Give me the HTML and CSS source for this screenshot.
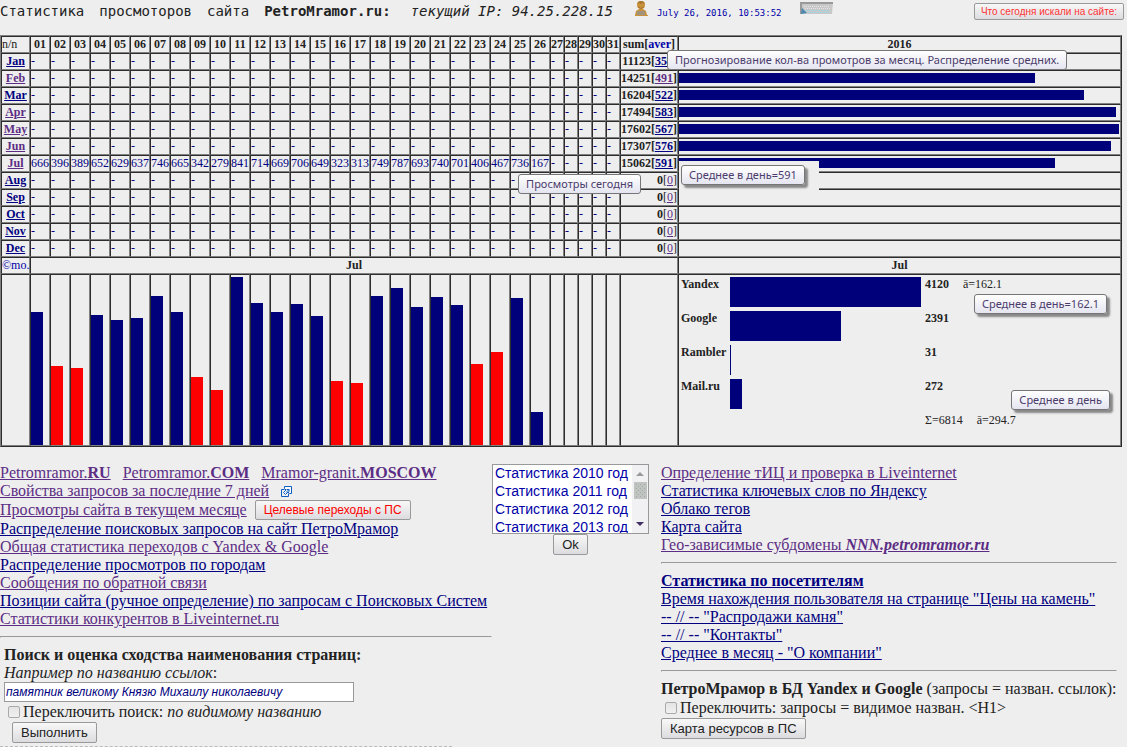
FILE: index.html
```html
<!DOCTYPE html>
<html lang="ru">
<head>
    <meta charset="UTF-8">
    <meta name="viewport" content="width=device-width, initial-scale=1.0">
    <title>Статистика просмоторов сайта PetroMramor.ru</title>
    <link rel="stylesheet" href="styles.css">
</head>
<body>

    <header class="top">
        <h1 class="title"><span>Статистика</span><span>просмоторов</span><span>сайта</span><b>PetroMramor.ru:</b></h1>
        <i class="ip">текущий IP: 94.25.228.15</i>
        <svg class="user-icon" width="16" height="18" viewBox="0 0 16 18">
            <path d="M2 15 L3 11 L6 9 H10 L13 11 L14 15 Z" fill="#c8923c"/>
            <circle cx="8" cy="5" r="4" fill="#c8923c"/>
            <path d="M4 4 Q5 1 8 1 Q11 1 12 4 L10 3 L8 4 L6 3 Z" fill="#a8762c"/>
            <path d="M5 7 Q8 10 11 7" fill="none" stroke="#a8762c"/>
            <path d="M4 11 H12 V15 H4 Z" fill="#a0927c"/>
            <path d="M2 15.5 H15" stroke="#c8923c"/>
        </svg>
        <span class="date">July 26, 2016, 10:53:52</span>
        <svg class="counter" width="33" height="13" viewBox="0 0 33 13">
            <path d="M0 0 H33 L32 12 H0 Z" fill="#c8c8c8"/>
            <path d="M0 1 H33 M1 0 V12" stroke="#999" stroke-width="2"/>
            <path d="M4 4.5 H30 M5 6.5 H30" stroke="#e4e4e4" stroke-dasharray="1 1"/>
            <path d="M6 8.5 H30 M8 10.5 H30" stroke="#9fd4e4" stroke-dasharray="2 1"/>
            <path d="M2 6 L7 11 L1 12 Z" fill="#4a88b0"/>
        </svg>
        <button class="btn btn-search">Что сегодня искали на сайте:</button>
    </header>

    <table class="stat">
        <colgroup id="cols"></colgroup>
        <tbody id="stat"></tbody>
    </table>

    <main class="bottom">
        <section class="left">
            <div class="line sites">
                <a href="#" class="v">Petromramor.<b>RU</b></a>
                <a href="#" class="v">Petromramor.<b>COM</b></a>
                <a href="#" class="v">Mramor-granit.<b>MOSCOW</b></a>
            </div>
            <div class="line with-icon">
                <a href="#" class="v">Свойства запросов за последние 7 дней</a>
                <svg width="11" height="11" viewBox="0 0 11 11" fill="none" stroke="#0b5cc4">
                    <path d="M3.5 3.5 H0.5 V10.5 H7.5 V7.5"/>
                    <path d="M3.5 0.5 H10.5 V7.5 H8.5 L7 6 L4.5 8.5 L2.5 6.5 L5 4 L3.5 2.5 Z" fill="#fff"/>
                    <path d="M5.5 3.5 H8 V6 M8 3.5 L5 6.5"/>
                </svg>
            </div>
            <div class="line with-btn">
                <a href="#" class="v">Просмотры сайта в текущем месяце</a>
                <button class="btn btn-target">Целевые переходы с ПС</button>
            </div>
            <div class="line"><a href="#">Распределение поисковых запросов на сайт ПетроМрамор</a></div>
            <div class="line"><a href="#" class="v">Общая статистика переходов с Yandex &amp; Google</a></div>
            <div class="line"><a href="#">Распределение просмотров по городам</a></div>
            <div class="line"><a href="#" class="v">Сообщения по обратной связи</a></div>
            <div class="line"><a href="#">Позиции сайта (ручное определение) по запросам с Поисковых Систем</a></div>
            <div class="line"><a href="#" class="v">Статистики конкурентов в Liveinternet.ru</a></div>
            <hr>
            <form class="search">
                <div class="line"><b>Поиск и оценка сходства наименования страниц:</b></div>
                <label class="line" for="q"><i>Например по названию ссылок</i>:</label>
                <input type="text" id="q" class="query" value="памятник великому Князю Михаилу николаевичу">
                <div class="check">
                    <input type="checkbox" id="visible">
                    <label for="visible">Переключить поиск: <i>по видимому названию</i></label>
                </div>
                <button type="button" class="btn btn-run">Выполнить</button>
            </form>
            <div class="dash-line"></div>
        </section>

        <form class="years">
            <div class="year-box">
                <select size="4" class="year-list" aria-label="Статистика по годам">
                    <option>Статистика 2010 год</option>
                    <option>Статистика 2011 год</option>
                    <option>Статистика 2012 год</option>
                    <option>Статистика 2013 год</option>
                    <option>Статистика 2014 год</option>
                    <option>Статистика 2015 год</option>
                    <option>Статистика 2016 год</option>
                </select>
                <svg class="scroll" width="16" height="68" viewBox="0 0 16 68" aria-hidden="true">
                    <rect width="16" height="68" fill="#f1f1f4"/>
                    <path d="M4 11 L8 7 L12 11 Z" fill="#999"/>
                    <rect x="2" y="17" width="13" height="17" fill="#c0c4c0"/>
                    <path d="M4 19.5 H14 M4 23.5 H14 M4 27.5 H14 M4 31.5 H14" stroke="#a4a8a4" stroke-dasharray="1 3"/>
                    <path d="M6 21.5 H14 M6 25.5 H14 M6 29.5 H14" stroke="#a4a8a4" stroke-dasharray="1 3"/>
                    <path d="M4 57 L12 57 L8 61 Z" fill="#403060"/>
                </svg>
            </div>
            <button type="button" class="btn">Ok</button>
        </form>

        <section class="right">
            <div class="line"><a href="#" class="v">Определение тИЦ и проверка в Liveinternet</a></div>
            <div class="line"><a href="#">Статистика ключевых слов по Яндексу</a></div>
            <div class="line"><a href="#">Облако тегов</a></div>
            <div class="line"><a href="#">Карта сайта</a></div>
            <div class="line"><a href="#" class="v">Гео-зависимые субдомены <b><i>NNN.petromramor.ru</i></b></a></div>
            <hr>
            <div class="line"><a href="#"><b>Статистика по посетителям</b></a></div>
            <div class="line"><a href="#">Время нахождения пользователя на странице "Цены на камень"</a></div>
            <div class="line"><a href="#">-- // -- "Распродажи камня"</a></div>
            <div class="line"><a href="#">-- // -- "Контакты"</a></div>
            <div class="line"><a href="#">Среднее в месяц - "О компании"</a></div>
            <hr>
            <form>
                <div class="line"><b>ПетроМрамор в БД Yandex и Google</b> (запросы = назван. ссылок):</div>
                <div class="check">
                    <input type="checkbox" id="h1">
                    <label for="h1">Переключить: запросы = видимое назван. &lt;H1&gt;</label>
                </div>
                <button type="button" class="btn">Карта ресурсов в ПС</button>
            </form>
        </section>
    </main>

    <script>
        // name, sum, average, visited month link, visited average link
        const months = [
            ["Jan", 11123, 358, 0, 0], ["Feb", 14251, 491, 1, 1], ["Mar", 16204, 522, 0, 0],
            ["Apr", 17494, 583, 1, 0], ["May", 17602, 567, 1, 0], ["Jun", 17307, 576, 1, 0],
            ["Jul", 15062, 591, 1, 0], ["Aug", 0, 0, 0, 1], ["Sep", 0, 0, 0, 1],
            ["Oct", 0, 0, 0, 1], ["Nov", 0, 0, 0, 1], ["Dec", 0, 0, 0, 1]
        ];
        const days = [666, 396, 389, 652, 629, 637, 746, 665, 342, 279, 841, 714, 669,
            706, 649, 323, 313, 749, 787, 693, 740, 701, 406, 467, 736, 167];
        const engines = [["Yandex", 4120, 191], ["Google", 2391, 111], ["Rambler", 31, 1], ["Mail.ru", 272, 12]];

        let cols = '<col class="c-month">';
        let html = '<tr><td>n/n</td>';
        for (let d = 1; d <= 31; d++) {
            cols += d <= 26 ? '<col class="c-day">' : '<col class="c-rest">';
            html += '<th>' + String(d).padStart(2, "0") + '</th>';
        }
        document.getElementById("cols").innerHTML = cols + '<col class="c-sum"><col>';
        html += '<th class="over">sum[<span class="aver">aver</span>]' +
            '<div class="tip tip-forecast">Прогнозирование кол-ва промотров за месяц. Распределение средних.</div></th><th>2016</th></tr>';

        for (const [name, sum, aver, v1, v2] of months) {
            html += '<tr><th><a href="#"' + (v1 ? ' class="v"' : '') + '>' + name + '</a></th>';
            for (let d = 0; d < 31; d++) {
                html += '<td class="num">' + (name == "Jul" && d < 26 ? days[d] : "-") + '</td>';
            }
            html += '<td class="sum over"><b>' + sum + '</b><span class="' + (sum ? 'bold' : '') + '">[<a href="#"' +
                (v2 ? ' class="v"' : '') + '>' + aver + '</a>]</span>' +
                (name == "Jul" ? '<div class="tip tip-today">Просмотры сегодня</div>' : '') + '</td>';
            html += '<td class="bar-cell over"><div class="hbar" style="width:' + Math.floor(sum / 40) + 'px"></div>' +
                (name == "Jul" ? '<div class="tip-back"><div class="tip shadow">Среднее в день=591</div></div>' : '') + '</td></tr>';
        }

        html += '<tr><td class="mo">©mo.</td><th colspan="32">Jul</th><th>Jul</th></tr>';

        html += '<tr class="chart"><td></td>';
        for (let d = 0; d < 31; d++) {
            let bar = "";
            if (days[d]) {
                const weekend = [1, 2, 8, 9, 15, 16, 22, 23].includes(d);
                bar = '<div class="vbar' + (weekend ? ' weekend' : '') + '" style="height:' + Math.floor(days[d] / 5) + 'px"></div>';
            }
            html += '<td>' + bar + '</td>';
        }
        html += '<td></td><td class="engines-cell over"><table class="engines">';
        for (const [name, n, w] of engines) {
            html += '<tr><th class="e-name">' + name + '</th><td class="e-bar"><div class="ebar" style="width:' + w + 'px"></div></td>' +
                '<td><b>' + n + '</b>' + (name == "Yandex" ? '<span class="avg">ā=162.1</span>' : '') + '</td></tr>';
        }
        html += '<tr><td></td><td></td><td>Σ=6814<span class="avg">ā=294.7</span></td></tr></table>' +
            '<div class="tip shadow tip-yandex">Среднее в день=162.1</div>' +
            '<div class="tip shadow tip-total">Среднее в день</div></td></tr>';
        document.getElementById("stat").innerHTML = html;
    </script>
</body>
</html>
```
FILE: styles.css
```css
body {
    margin: 0;
    background: #eee;
    color: #222;
    font-family: "Liberation Serif", "Times New Roman", serif;
    font-size: 16px;
    line-height: 18px;
}

a {
    color: #000080;
}

a.v {
    color: #5c2d84;
}

.top {
    display: flex;
    align-items: flex-start;
    height: 35px;
    font-family: "DejaVu Sans Mono", monospace;
    font-size: 14px;
    line-height: 22px;
    white-space: nowrap;
}

.title {
    display: flex;
    gap: 15px;
    margin: 0 20px 0 0;
    font-size: 14px;
    font-weight: normal;
}

.user-icon {
    margin: 0 8px 0 20px;
}

.date {
    margin-right: 18px;
    color: #0000a8;
    font-size: 9px;
    line-height: 26px;
}

.counter {
    margin-top: 2px;
}

.btn {
    height: 21px;
    padding: 0 8px;
    border: 1px solid #999;
    border-radius: 2px;
    background: linear-gradient(#f8f8f8, #dcdce0);
    color: #222;
    font-family: "Liberation Sans", Arial, sans-serif;
    font-size: 13px;
    line-height: 18px;
    white-space: nowrap;
}

.btn-search {
    height: 17px;
    margin: 3px 3px 0 auto;
    padding: 0 6px;
    color: #f33;
    font-size: 10px;
    line-height: 14px;
}

.stat {
    width: calc(100% - 5px);
    table-layout: fixed;
    border: 1px solid;
    border-color: #808080 #2c2c2c #2c2c2c #808080;
    border-spacing: 0;
    font-size: 12px;
    line-height: 15px;
}

.stat th,
.stat td {
    height: 15px;
    padding: 0;
    border: 1px solid;
    border-color: #2c2c2c #808080 #808080 #2c2c2c;
    white-space: nowrap;
}

.c-month { width: 29px; }
.c-day { width: 20px; }
.c-rest { width: 14px; }
.c-sum { width: 58px; }

.aver,
.stat .mo {
    color: #0000a8;
}

.stat .num {
    color: #000080;
}

.sum {
    text-align: right;
}

.bold {
    font-weight: bold;
}

.over {
    position: relative;
}

.stat .bar-cell {
    vertical-align: top;
}

.hbar {
    height: 10px;
    margin-top: 2px;
    background: #00007b;
}

.stat .chart td {
    height: 170px;
    vertical-align: bottom;
}

.vbar {
    width: 12px;
    background: #00007b;
}

.weekend {
    background: #f00;
}

.stat .chart .engines-cell {
    height: 168px;
    padding: 2px 2px 0;
    vertical-align: top;
}

.engines {
    border-spacing: 0;
}

.stat .engines th,
.stat .chart .engines td {
    height: 15px;
    border: 0;
    text-align: left;
    vertical-align: top;
}

.stat .engines .e-name {
    width: 49px;
}

.stat .engines .e-bar {
    width: 195px;
}

.ebar {
    height: 30px;
    margin-bottom: 4px;
    background: #00007b;
}

.avg {
    margin-left: 14px;
}

.tip {
    position: absolute;
    z-index: 2;
    box-sizing: border-box;
    height: 20px;
    padding: 0 7px;
    border: 1px solid #767676;
    border-radius: 3px;
    background: linear-gradient(#fff, #e4e5f0);
    color: #4c3c6c;
    font-family: "Noto Sans", "Open Sans", sans-serif;
    font-size: 11px;
    font-weight: normal;
    line-height: 17px;
    white-space: nowrap;
}

.shadow {
    box-shadow: 3px 3px 2px #888;
}

.tip-forecast {
    top: 13px;
    left: 46px;
}

.tip-today {
    top: 18px;
    right: 36px;
}

.tip-back {
    position: absolute;
    z-index: 1;
    top: 5px;
    left: 0;
    width: 140px;
    height: 30px;
    background: #eee;
}

.tip-back .tip {
    top: 4px;
    left: 2px;
}

.tip-yandex {
    top: 19px;
    right: 13px;
}

.tip-total {
    top: 115px;
    right: 10px;
}

.bottom {
    display: flex;
    align-items: flex-start;
    margin-top: 17px;
}

.left {
    width: 492px;
}

.line {
    display: block;
    min-height: 18px;
    white-space: nowrap;
}

.sites,
.with-icon,
.with-btn {
    display: flex;
    align-items: center;
    gap: 12px;
}

.with-btn {
    gap: 8px;
    height: 20px;
}

.with-btn .btn {
    height: 20px;
}

.btn-target {
    color: #f00;
    font-size: 12px;
}

hr {
    margin: 8px 0;
    border: 1px solid;
    border-color: #999 #eee #eee #999;
}

.search {
    padding-left: 4px;
}

.query {
    display: block;
    box-sizing: border-box;
    width: 350px;
    height: 20px;
    padding: 0 1px;
    border: 1px solid #999;
    background: #fff;
    color: #000080;
    font-family: "Liberation Sans", Arial, sans-serif;
    font-size: 12px;
    font-style: italic;
}

.check {
    display: flex;
    align-items: center;
    gap: 3px;
    height: 20px;
    padding-left: 4px;
    white-space: nowrap;
}

.check input {
    appearance: none;
    width: 12px;
    height: 12px;
    margin: 0;
    border: 1px solid #aaa;
    border-radius: 2px;
    background: linear-gradient(#e4e4e4, #f0f0f0);
}

.btn-run {
    display: block;
    margin-left: 8px;
}

.dash-line {
    width: 452px;
    margin-top: 3px;
    border-top: 1px dashed #bbb;
}

.years {
    display: flex;
    flex-direction: column;
    align-items: center;
    margin-right: 12px;
}

.year-box {
    position: relative;
    height: 70px;
}

.year-list {
    box-sizing: border-box;
    width: 157px;
    height: 70px;
    padding: 0;
    border: 1px solid #999;
    border-radius: 0;
    background: #fff;
    color: #0000a8;
    font-family: "Liberation Sans", Arial, sans-serif;
    font-size: 14px;
    scrollbar-width: none;
}

.year-list option {
    min-height: 18px;
    padding: 0 2px;
    line-height: 18px;
}

.scroll {
    position: absolute;
    top: 1px;
    right: 1px;
    pointer-events: none;
}

.right {
    width: 456px;
}
```
